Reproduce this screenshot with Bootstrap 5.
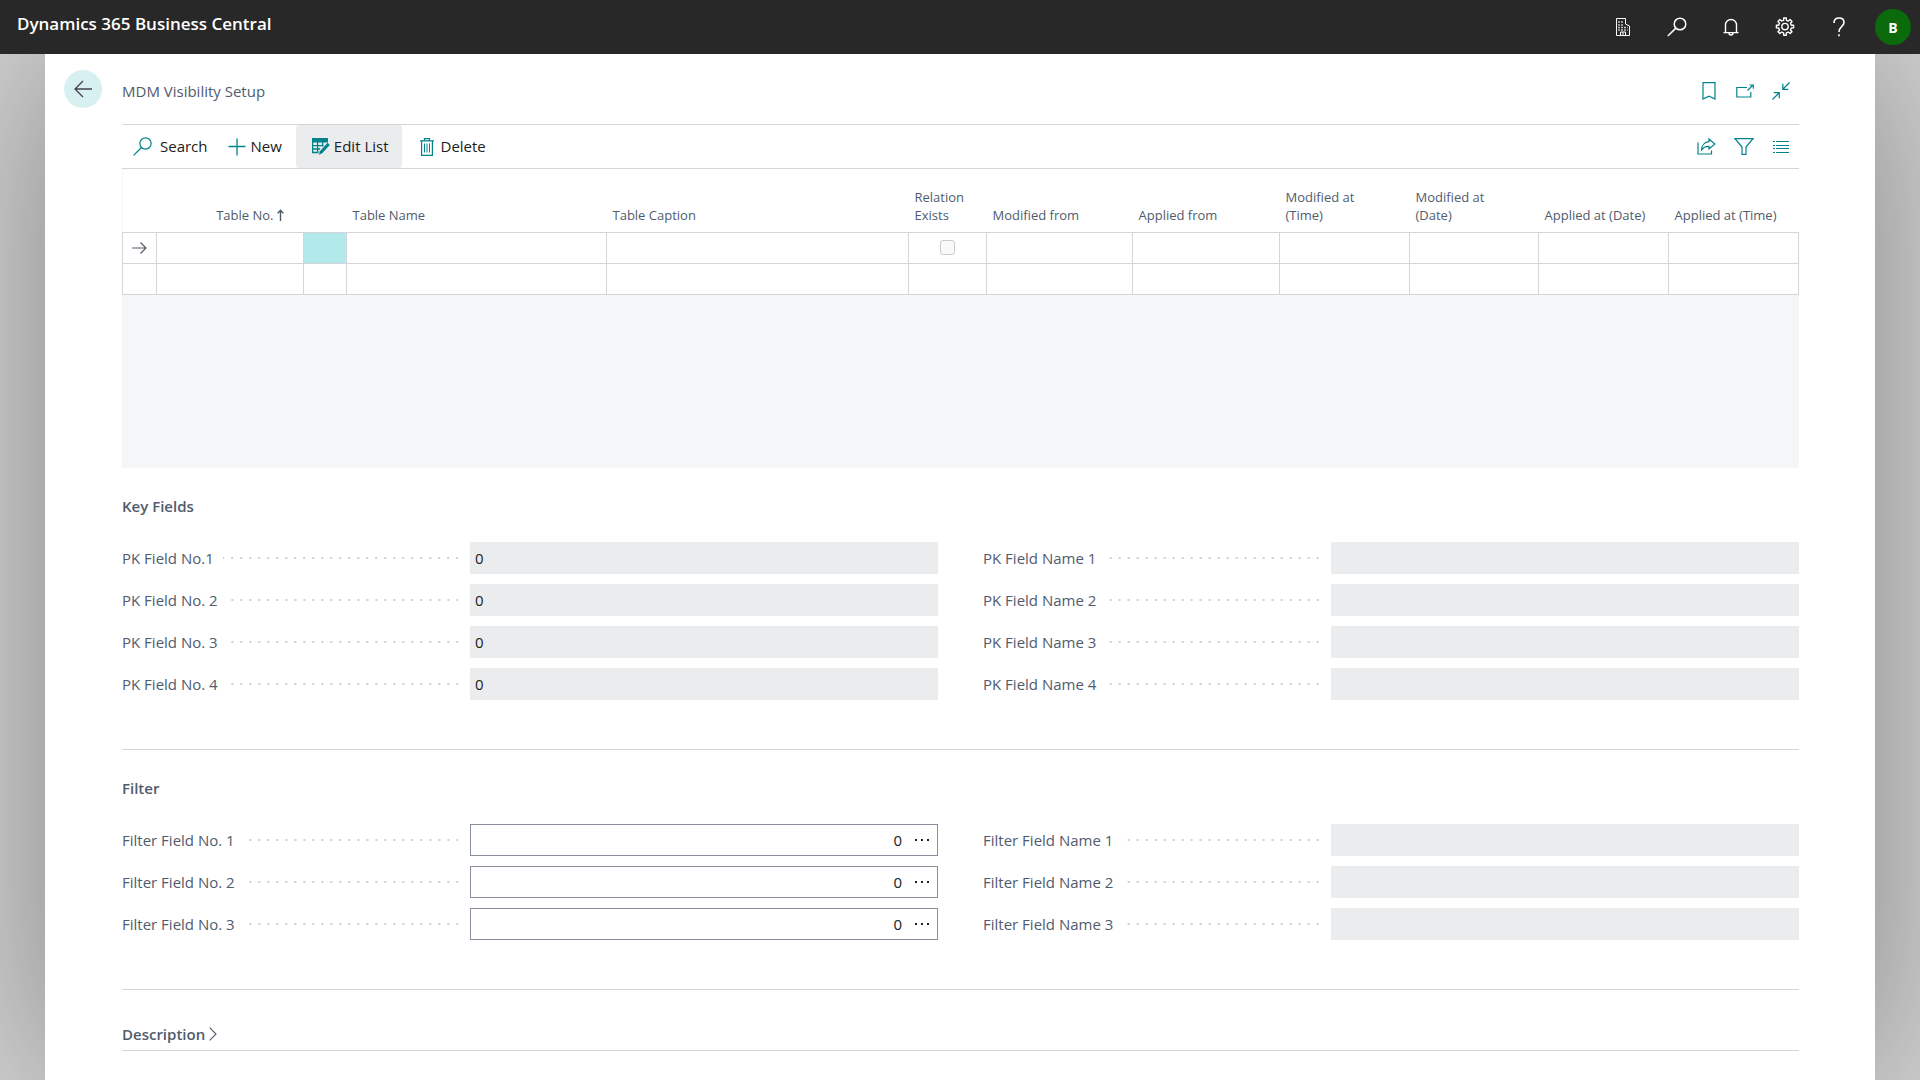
<!DOCTYPE html>
<html lang="en">
<head>
<meta charset="utf-8">
<meta name="viewport" content="width=device-width, initial-scale=1">
<title>MDM Visibility Setup - Dynamics 365 Business Central</title>
<link href="https://cdn.jsdelivr.net/npm/bootstrap@5.3.0/dist/css/bootstrap.min.css" rel="stylesheet">
<style>
  :root { --teal: #00838a; --slate: #505c6d; --rule: #d3d5d9; --field: #ebecee; --ink: #212121; }
  body { font-family: "Open Sans", "Noto Sans", sans-serif; font-size: 15px; line-height: 20px; color: var(--slate); background: #d2d2d2; }
  svg { display: block; fill: none; stroke: currentColor; }
  .top-bar { height: 54px; background: #282828; z-index: 2; }
  .brand { font-size: 17px; line-height: 24px; font-weight: 600; color: #fff; padding: 0 0 6px 17px; }
  .top-btn { width: 54px; height: 54px; color: #fff; }
  .avatar { width: 36px; height: 36px; background: #0b6a0b; font-size: 14px; font-weight: 700; }
  .sheet { margin: 0 45px; padding: 16px 76px 29px 19px; min-height: calc(100vh - 54px); background: #fff; box-shadow: 0 0 164px rgba(0,0,0,.36); }
  .back-btn { width: 38px; height: 38px; background: #d9f0f2; color: #444; }
  .page-title { font-size: 15px; line-height: 20px; margin: 0 0 0 20px; }
  .body-area { padding-left: 58px; }
  .tool-btn { width: 36px; height: 34px; color: var(--teal); }
  .action-bar { margin-top: 16px; border-top: 1px solid var(--rule); border-bottom: 1px solid var(--rule); height: 45px; }
  .action-bar .tool-btn { width: 37px; }
  .action { color: var(--ink); font-size: 15px; border-radius: 3px; padding: 0 14px 0 11px; gap: 8px; }
  .action + .action { padding-left: 6px; gap: 5px; }
  .action svg { color: var(--teal); }
  .action + .action.on { background: var(--field); padding: 0 13px 0 16px; gap: 4px; }
  .action.on + .action { padding-left: 18px; gap: 7px; }
  .grid-area { background: #f5f6f8; min-height: 299px; }
  .grid { table-layout: fixed; width: 100%; border-collapse: collapse; }
  .grid th { height: 63px; padding: 0 6px 8px; font-size: 13px; line-height: 18px; font-weight: 400; vertical-align: bottom; background: #fff; }
  .grid td { height: 31px; padding: 0; border: 1px solid var(--rule); background: #fff; text-align: center; vertical-align: middle; }
  .grid td.picked { background: #b2e9eb; }
  .sort-head { gap: 3px; padding-right: 14px; }
  .grid .form-check-input { display: block; width: 15px; height: 15px; margin: 0 auto; border-color: #999; border-radius: 3px; background: #f4f4f4; }
  .section { border-bottom: 1px solid var(--rule); padding: 24px 0 49px; }
  .section.folded { padding: 34px 0 6px; }
  .section-title { font-size: 15px; line-height: 20px; font-weight: 600; margin: 0; }
  .pairs { display: grid; grid-template-columns: 1fr 1fr; column-gap: 45px; row-gap: 10px; padding-top: 22px; }
  .cap { flex: 0 0 348px; }
  .dots { height: 2px; margin: 0 12px 0 9px; background: linear-gradient(90deg, #d0d0d0 2px, transparent 2px) right -7px top 0 / 9px 2px repeat-x; }
  .val { height: 32px; min-width: 0; font-size: 15px; line-height: 20px; color: var(--ink); border: 0; border-radius: 0; padding: 0 5px; }
  .val[readonly] { background: var(--field); }
  .lookup { height: 32px; min-width: 0; border: 1px solid #8a909e; }
  .lookup .val { height: 30px; background: transparent; }
  .more { width: 32px; color: var(--ink); }
</style>
<script src="https://cdn.jsdelivr.net/npm/bootstrap@5.3.0/dist/js/bootstrap.bundle.min.js" defer></script>
</head>
<body>
<header class="top-bar d-flex align-items-center justify-content-between position-relative">
  <span class="brand">Dynamics 365 Business Central</span>
  <nav class="d-flex" aria-label="Global">
    <button type="button" class="top-btn btn p-0 border-0 d-flex align-items-center justify-content-center" aria-label="Company">
      <svg width="14" height="18" viewBox="0 0 14 18" stroke="#ddd"><path d="M.5 17.500V.5h9V6l4 2v9.500z"/><path d="M4.500 17.500v-3.500h5v3.500M7 14v3.500"/><path stroke-width="1.400" stroke-dasharray="1.400 1.600" d="M2.300 4h6M2.300 7h6M2.300 9.500h9.500M2.300 12h9.500"/></svg>
    </button>
    <button type="button" class="top-btn btn p-0 border-0 d-flex align-items-center justify-content-center" aria-label="Search pages">
      <svg width="20" height="20" viewBox="0 0 20 20" stroke-width="1.500"><circle cx="13" cy="7" r="5.800"/><path d="M8.900 11.100.8 19"/></svg>
    </button>
    <button type="button" class="top-btn btn p-0 border-0 d-flex align-items-center justify-content-center" aria-label="Notifications">
      <svg width="18" height="18" viewBox="0 0 18 18" stroke-width="1.400"><path d="M3.500 14.500V7a5.500 5.500 0 0 1 11 0v7.500M1.500 14.600h15M7 15a2 2 0 0 0 4 0"/></svg>
    </button>
    <button type="button" class="top-btn btn p-0 border-0 d-flex align-items-center justify-content-center" aria-label="Settings">
      <svg width="20" height="20" viewBox="0 0 20 20" stroke-width="1.400"><path stroke-linejoin="round" d="M8.600 3.300 8.700 1h2.600l.1 2.300 2 .8 1.700-1.500 1.900 1.900-1.500 1.700.8 2 2.300.1v2.600l-2.300.1-.8 2 1.500 1.700-1.900 1.900-1.700-1.500-2 .8-.1 2.300H8.700l-.1-2.300-2-.8-1.700 1.500L3 14.700 4.500 13l-.8-2-2.300-.1V8.300l2.300-.1.8-2L3 4.500l1.900-1.900 1.700 1.500z"/><circle cx="10" cy="9.600" r="3.200"/></svg>
    </button>
    <button type="button" class="top-btn btn p-0 border-0 d-flex align-items-center justify-content-center" aria-label="Help">
      <svg width="14" height="20" viewBox="0 0 14 20" stroke-width="1.600"><path d="M2 6c0-3.200 2.200-5 5-5s5 1.700 5 4.500c0 3.800-5 4.300-5 9.500"/><path d="M7 17.200v2"/></svg>
    </button>
    <button type="button" class="top-btn btn p-0 border-0 d-flex align-items-center justify-content-center" aria-label="Account">
      <span class="avatar rounded-circle d-flex align-items-center justify-content-center">B</span>
    </button>
  </nav>
</header>

<main class="sheet">
  <div class="d-flex align-items-center">
    <button type="button" class="back-btn btn p-0 border-0 rounded-circle d-flex align-items-center justify-content-center" aria-label="Back">
      <svg width="18" height="18" viewBox="0 0 18 18" stroke-width="1.300"><path d="M18 9H.8M9 1 1 9l8 8"/></svg>
    </button>
    <h1 class="page-title fw-normal pt-1">MDM Visibility Setup</h1>
    <div class="d-flex ms-auto pt-1">
      <button type="button" class="tool-btn btn p-0 border-0 d-flex align-items-center justify-content-center" aria-label="Bookmark">
        <svg width="14" height="18" viewBox="0 0 14 18" stroke-width="1.200"><path d="M1 .6h12v16.400L7 14.200 1 17z"/></svg>
      </button>
      <button type="button" class="tool-btn btn p-0 border-0 d-flex align-items-center justify-content-center" aria-label="Open in new window">
        <svg width="18" height="16" viewBox="0 0 18 16" stroke-width="1.200"><path d="M11 4.500H.8v9.500h14V9"/><path d="M11.500 7.500l5.500-5.500M13.500 2h3.800v3.800"/></svg>
      </button>
      <button type="button" class="tool-btn btn p-0 border-0 d-flex align-items-center justify-content-center" aria-label="Collapse">
        <svg width="18" height="18" viewBox="0 0 18 18" stroke-width="1.200"><path d="M17.500.5l-6.500 6.500M10.800 1.800v5.500h5.500M.5 17.500 7 11M1.800 10.700h5.500v5.500"/></svg>
      </button>
    </div>
  </div>

  <div class="body-area">
    <div class="action-bar d-flex align-items-stretch">
      <button type="button" class="action btn border-0 d-flex align-items-center">
        <svg width="19" height="19" viewBox="0 0 19 19" stroke-width="1.200"><circle cx="12.500" cy="6.500" r="5.600"/><path d="M8.500 10.500.6 18.400"/></svg>Search
      </button>
      <button type="button" class="action btn border-0 d-flex align-items-center">
        <svg width="18" height="18" viewBox="0 0 18 18" stroke-width="1.300"><path d="M9 .5v17M.5 8.500h17"/></svg>New
      </button>
      <button type="button" class="action on btn border-0 d-flex align-items-center" aria-pressed="true">
        <svg width="18" height="17" viewBox="0 0 18 17"><path fill="currentColor" stroke="none" d="M0 0h16v4.500H0z"/><path stroke-width="1.300" d="M.6 4v10.500h6M.6 7.600h11M.6 11h7.500M5.600 4v10M10.600 4v4.500"/><path fill="currentColor" stroke="none" d="M15.600 4.800l2.200 2.200-7.600 8.300-3.400 1.400 1.100-3.500z"/></svg>Edit List
      </button>
      <button type="button" class="action btn border-0 d-flex align-items-center">
        <svg width="14" height="18" viewBox="0 0 14 18" stroke-width="1.200"><path d="M0 2.800h14M4.500 2.500V.6h5v1.900M1.600 3v14.400h10.800V3"/><path stroke-width="1" d="M4.500 5.500v9M7 5.500v9M9.500 5.500v9"/></svg>Delete
      </button>
      <div class="d-flex ms-auto align-items-center">
        <button type="button" class="tool-btn btn p-0 border-0 d-flex align-items-center justify-content-center" aria-label="Share">
          <svg width="19" height="17" viewBox="0 0 19 17" stroke-width="1.200"><path d="M1 4.500v11.500h13.500v-3.500"/><path d="M12 1l5.800 5-5.800 5V8.300C8.500 8.200 6.500 9 4.500 12 4.700 7.500 7.500 4 12 3.700z"/></svg>
        </button>
        <button type="button" class="tool-btn btn p-0 border-0 d-flex align-items-center justify-content-center" aria-label="Filter">
          <svg width="20" height="17" viewBox="0 0 20 17" stroke-width="1.200"><path d="M1 .7h18l-7 8.300v7.300H8V9z"/></svg>
        </button>
        <button type="button" class="tool-btn btn p-0 border-0 d-flex align-items-center justify-content-center" aria-label="List view">
          <svg width="16" height="12" viewBox="0 0 16 12"><path d="M0 .5h2M3 .5h13M0 4.500h2M3 4.500h13M0 7.500h2M3 7.500h13M0 11.500h2M3 11.500h13"/></svg>
        </button>
      </div>
    </div>

    <div class="grid-area">
      <table class="grid">
        <colgroup><col style="width:34px"><col style="width:147px"><col style="width:43px"><col style="width:260px"><col style="width:302px"><col style="width:78px"><col style="width:146px"><col style="width:147px"><col style="width:130px"><col style="width:129px"><col style="width:130px"><col style="width:130px"></colgroup>
        <thead>
          <tr>
            <th></th>
            <th><span class="sort-head d-flex justify-content-end align-items-center">Table No.<svg width="7" height="12" viewBox="0 0 7 12" stroke-width="1.400"><path d="M3.500 12V1.500M.7 4.200 3.500 1.200l2.800 3"/></svg></span></th>
            <th></th><th>Table Name</th><th>Table Caption</th><th>Relation Exists</th><th>Modified from</th><th>Applied from</th><th>Modified at<br>(Time)</th><th>Modified at<br>(Date)</th><th class="text-nowrap">Applied at (Date)</th><th class="text-nowrap">Applied at (Time)</th>
          </tr>
        </thead>
        <tbody>
          <tr>
            <td><svg class="mx-auto" width="15" height="12" viewBox="0 0 15 12" stroke="#444" stroke-width="1.200"><path d="M0 6h14M8.500.5 14 6l-5.500 5.500"/></svg></td>
            <td></td><td class="picked"></td><td></td><td></td>
            <td><input class="form-check-input" type="checkbox" disabled aria-label="Relation Exists"></td>
            <td></td><td></td><td></td><td></td><td></td><td></td>
          </tr>
          <tr><td></td><td></td><td></td><td></td><td></td><td></td><td></td><td></td><td></td><td></td><td></td><td></td></tr>
        </tbody>
      </table>
    </div>

    <section class="section">
      <h2 class="section-title py-1">Key Fields</h2>
      <div class="pairs">
        <div class="d-flex"><label class="cap d-flex align-items-center" for="pk1">PK Field No.1<span class="dots flex-fill"></span></label><input id="pk1" class="val form-control" value="0" readonly></div>
        <div class="d-flex"><label class="cap d-flex align-items-center" for="pn1">PK Field Name 1<span class="dots flex-fill"></span></label><input id="pn1" class="val form-control" readonly></div>
        <div class="d-flex"><label class="cap d-flex align-items-center" for="pk2">PK Field No. 2<span class="dots flex-fill"></span></label><input id="pk2" class="val form-control" value="0" readonly></div>
        <div class="d-flex"><label class="cap d-flex align-items-center" for="pn2">PK Field Name 2<span class="dots flex-fill"></span></label><input id="pn2" class="val form-control" readonly></div>
        <div class="d-flex"><label class="cap d-flex align-items-center" for="pk3">PK Field No. 3<span class="dots flex-fill"></span></label><input id="pk3" class="val form-control" value="0" readonly></div>
        <div class="d-flex"><label class="cap d-flex align-items-center" for="pn3">PK Field Name 3<span class="dots flex-fill"></span></label><input id="pn3" class="val form-control" readonly></div>
        <div class="d-flex"><label class="cap d-flex align-items-center" for="pk4">PK Field No. 4<span class="dots flex-fill"></span></label><input id="pk4" class="val form-control" value="0" readonly></div>
        <div class="d-flex"><label class="cap d-flex align-items-center" for="pn4">PK Field Name 4<span class="dots flex-fill"></span></label><input id="pn4" class="val form-control" readonly></div>
      </div>
    </section>

    <section class="section">
      <h2 class="section-title py-1">Filter</h2>
      <div class="pairs">
        <div class="d-flex"><label class="cap d-flex align-items-center" for="ff1">Filter Field No. 1<span class="dots flex-fill"></span></label><div class="lookup d-flex flex-fill"><input id="ff1" class="val form-control text-end" value="0"><button type="button" class="more btn p-0 border-0" aria-label="Look up"><svg class="mx-auto" width="14" height="2" viewBox="0 0 14 2" stroke-width="2"><path d="M0 1h2M6 1h2M12 1h2"/></svg></button></div></div>
        <div class="d-flex"><label class="cap d-flex align-items-center" for="fn1">Filter Field Name 1<span class="dots flex-fill"></span></label><input id="fn1" class="val form-control" readonly></div>
        <div class="d-flex"><label class="cap d-flex align-items-center" for="ff2">Filter Field No. 2<span class="dots flex-fill"></span></label><div class="lookup d-flex flex-fill"><input id="ff2" class="val form-control text-end" value="0"><button type="button" class="more btn p-0 border-0" aria-label="Look up"><svg class="mx-auto" width="14" height="2" viewBox="0 0 14 2" stroke-width="2"><path d="M0 1h2M6 1h2M12 1h2"/></svg></button></div></div>
        <div class="d-flex"><label class="cap d-flex align-items-center" for="fn2">Filter Field Name 2<span class="dots flex-fill"></span></label><input id="fn2" class="val form-control" readonly></div>
        <div class="d-flex"><label class="cap d-flex align-items-center" for="ff3">Filter Field No. 3<span class="dots flex-fill"></span></label><div class="lookup d-flex flex-fill"><input id="ff3" class="val form-control text-end" value="0"><button type="button" class="more btn p-0 border-0" aria-label="Look up"><svg class="mx-auto" width="14" height="2" viewBox="0 0 14 2" stroke-width="2"><path d="M0 1h2M6 1h2M12 1h2"/></svg></button></div></div>
        <div class="d-flex"><label class="cap d-flex align-items-center" for="fn3">Filter Field Name 3<span class="dots flex-fill"></span></label><input id="fn3" class="val form-control" readonly></div>
      </div>
    </section>

    <section class="section folded">
      <h2 class="section-title d-flex align-items-center gap-1">Description<svg width="8" height="14" viewBox="0 0 8 14" stroke-width="1.100"><path d="M.7.7 7 7 .7 13.300"/></svg></h2>
    </section>
  </div>
</main>
</body>
</html>
